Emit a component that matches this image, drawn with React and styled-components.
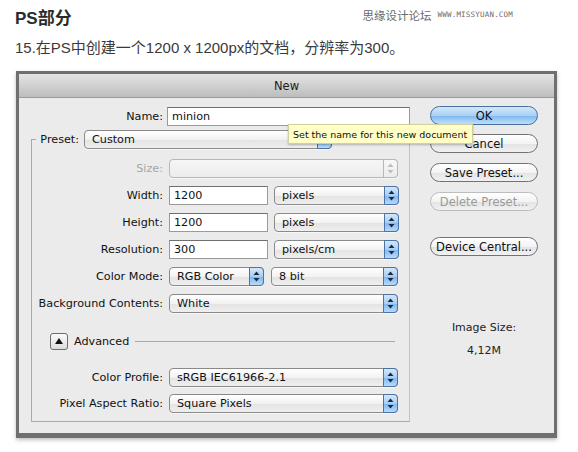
import React from "react";
import styled, { createGlobalStyle } from "styled-components";

const GlobalStyle = createGlobalStyle`
  html, body {
    margin: 0;
    padding: 0;
    background: #ffffff;
  }
  body {
    font-family: "DejaVu Sans", "Noto Sans CJK SC", sans-serif;
  }
`;

const Page = styled.div`
  width: 578px;
  height: 452px;
  position: relative;
  overflow: hidden;
`;

const Header = styled.div`
  padding: 4px 15px 0 15px;
  font-family: "Liberation Sans", "Noto Sans CJK SC", sans-serif;
  color: #333;
`;

const TopLine = styled.div`
  display: flex;
  justify-content: space-between;
  align-items: center;
`;

const Heading = styled.h2`
  margin: 0;
  font-size: 17px;
  font-weight: bold;
  color: #2b2b2b;
`;

const Watermark = styled.div`
  display: flex;
  align-items: center;
  gap: 6px;
  margin-right: 50px;
  margin-bottom: 4px;
  color: #6a6a6a;
  font-size: 11.5px;
  span {
    font-size: 7.5px;
    font-family: "DejaVu Sans Mono", monospace;
    letter-spacing: 0.2px;
  }
`;

const Intro = styled.p`
  margin: 7px 0 0 0;
  font-size: 15px;
  color: #3a3a3a;
`;

const Dialog = styled.div`
  margin: 14px 0 0 16px;
  width: 535px;
  border: 3px solid #6f6f6f;
  border-bottom-width: 5px;
  background: #ebebeb;
  font-size: 11.2px;
  color: #111;
  box-shadow: 0 2px 4px rgba(0, 0, 0, 0.25);
`;

const TitleBar = styled.div`
  height: 23px;
  display: flex;
  align-items: center;
  justify-content: center;
  background: linear-gradient(#e4e4e4, #bdbdbd);
  border-bottom: 1px solid #9a9a9a;
  font-size: 11.5px;
  color: #1c1c1c;
`;

const Body = styled.div`
  display: flex;
  padding: 8px 16px 11px 12px;
  gap: 20px;
  position: relative;
`;

const LeftCol = styled.div`
  width: 379px;
  display: flex;
  flex-direction: column;
`;

const RightCol = styled.div`
  width: 109px;
  display: flex;
  flex-direction: column;
  align-items: stretch;
`;

const Row = styled.div`
  display: flex;
  align-items: center;
  height: 20px;
  margin-top: ${(p) => p.$top || 0}px;
`;

const Label = styled.label`
  width: ${(p) => p.$w || 131}px;
  flex: none;
  text-align: right;
  margin-right: ${(p) => p.$gap || 6}px;
  color: ${(p) => (p.$disabled ? "#a6a6a6" : "#111")};
  white-space: nowrap;
`;

const Input = styled.div`
  width: ${(p) => p.$w}px;
  height: 19px;
  box-sizing: border-box;
  background: #fff;
  border: 1px solid #9a9a9a;
  border-top-color: #6f6f6f;
  padding: 0 4px;
  display: flex;
  align-items: center;
  margin-right: ${(p) => p.$mr || 0}px;
`;

const SelectBox = styled.div`
  position: relative;
  width: ${(p) => p.$w}px;
  height: 19px;
  box-sizing: border-box;
  border: 1px solid ${(p) => (p.$disabled ? "#b8b8b8" : "#8a8a8a")};
  border-radius: 4px;
  background: ${(p) =>
    p.$disabled
      ? "linear-gradient(#f6f6f6, #ececec)"
      : "linear-gradient(#ffffff 0%, #f2f2f2 50%, #e3e3e3 51%, #efefef 100%)"};
  display: flex;
  align-items: center;
  padding-left: 7px;
  margin-right: ${(p) => p.$mr || 0}px;
  box-shadow: 0 1px 0 rgba(255, 255, 255, 0.6);
`;

const Stepper = styled.div`
  position: absolute;
  right: -1px;
  top: -1px;
  bottom: -1px;
  width: 15px;
  border-radius: 0 4px 4px 0;
  border: 1px solid ${(p) => (p.$disabled ? "#b8b8b8" : "#4a73a8")};
  background: ${(p) =>
    p.$disabled
      ? "linear-gradient(#f8f8f8, #ececec)"
      : "linear-gradient(#d4e7fa 0%, #a8cdf3 50%, #7fb5ee 51%, #b6dafc 100%)"};
  display: flex;
  align-items: center;
  justify-content: center;
  box-sizing: border-box;
`;

const Select = ({ w, mr, disabled, children }) => (
  <SelectBox $w={w} $mr={mr} $disabled={disabled}>
    {children}
    <Stepper $disabled={disabled}>
      <svg width="7" height="11" viewBox="0 0 7 11">
        <path d="M3.5 0.5 L6.5 4 L0.5 4 Z" fill={disabled ? "#bdbdbd" : "#1b2a44"} />
        <path d="M3.5 10.5 L6.5 7 L0.5 7 Z" fill={disabled ? "#bdbdbd" : "#1b2a44"} />
      </svg>
    </Stepper>
  </SelectBox>
);

const Group = styled.fieldset`
  margin: 3px 0 0 0;
  padding: 0 0 8px 0;
  border: 1px solid #a9a9a9;
  border-right-color: #c2c2c2;
  min-width: 0;
`;

const Legend = styled.legend`
  display: flex;
  align-items: center;
  height: 20px;
  padding: 0 4px 0 3px;
  margin-left: 4px;
`;

const DisclosureRow = styled.div`
  display: flex;
  align-items: center;
  height: 18px;
  margin: 19px 14px 0 18px;
`;

const Disclosure = styled.div`
  width: 16px;
  height: 15px;
  border: 1px solid #6d6d6d;
  border-radius: 3px;
  background: linear-gradient(#fbfbfb, #dcdcdc);
  display: flex;
  align-items: center;
  justify-content: center;
  margin-right: 6px;
`;

const Rule = styled.div`
  flex: 1;
  height: 1px;
  background: #a8a8a8;
  margin-left: 6px;
`;

const Button = styled.div`
  height: 19px;
  box-sizing: border-box;
  border-radius: 10px;
  border: 1px solid ${(p) => (p.$disabled ? "#bdbdbd" : p.$primary ? "#4a6f9c" : "#727272")};
  background: ${(p) =>
    p.$primary
      ? "linear-gradient(#d3e8fb 0%, #a9d0f5 50%, #7db7ef 51%, #bfe0fc 100%)"
      : "linear-gradient(#ffffff 0%, #f3f3f3 50%, #e3e3e3 51%, #f1f1f1 100%)"};
  color: ${(p) => (p.$disabled ? "#9a9a9a" : "#111")};
  display: flex;
  align-items: center;
  justify-content: center;
  font-size: 11.5px;
  margin-top: ${(p) => p.$top || 0}px;
`;

const Info = styled.div`
  text-align: center;
  margin-top: ${(p) => p.$top || 0}px;
  font-size: 11px;
  color: #222;
`;

const Tooltip = styled.div`
  position: absolute;
  left: 269px;
  top: 26px;
  width: 185px;
  height: 20px;
  box-sizing: border-box;
  background: #ffffc6;
  border: 1px solid #d0d0a0;
  box-shadow: 0 1px 2px rgba(0, 0, 0, 0.25);
  font-size: 9.5px;
  color: #111;
  display: flex;
  align-items: center;
  padding-left: 4px;
  white-space: nowrap;
`;

export default function App() {
  return (
    <Page>
      <GlobalStyle />
      <Header>
        <TopLine>
          <Heading>PS部分</Heading>
          <Watermark>
            思缘设计论坛 <span>WWW.MISSYUAN.COM</span>
          </Watermark>
        </TopLine>
        <Intro>15.在PS中创建一个1200 x 1200px的文档，分辨率为300。</Intro>
      </Header>

      <Dialog>
        <TitleBar>New</TitleBar>
        <Body>
          <LeftCol>
            <Row>
              <Label $w={132} $gap={4}>Name:</Label>
              <Input $w={243}>minion</Input>
            </Row>
            <Group>
              <Legend>
                <Label as="span" $w={40} $gap={5}>Preset:</Label>
                <Select w={248}>Custom</Select>
              </Legend>
              <Row $top={9}>
                <Label $disabled>Size:</Label>
                <Select w={229} disabled></Select>
              </Row>
              <Row $top={7}>
                <Label>Width:</Label>
                <Input $w={99} $mr={6}>1200</Input>
                <Select w={125}>pixels</Select>
              </Row>
              <Row $top={7}>
                <Label>Height:</Label>
                <Input $w={99} $mr={6}>1200</Input>
                <Select w={125}>pixels</Select>
              </Row>
              <Row $top={7}>
                <Label>Resolution:</Label>
                <Input $w={99} $mr={6}>300</Input>
                <Select w={125}>pixels/cm</Select>
              </Row>
              <Row $top={7}>
                <Label>Color Mode:</Label>
                <Select w={95} mr={7}>RGB Color</Select>
                <Select w={127}>8 bit</Select>
              </Row>
              <Row $top={7}>
                <Label>Background Contents:</Label>
                <Select w={229}>White</Select>
              </Row>
              <DisclosureRow>
                <Disclosure>
                  <svg width="8" height="6" viewBox="0 0 8 6">
                    <path d="M4 0 L8 6 L0 6 Z" fill="#111" />
                  </svg>
                </Disclosure>
                Advanced
                <Rule />
              </DisclosureRow>
              <Row $top={17}>
                <Label>Color Profile:</Label>
                <Select w={229}>sRGB IEC61966-2.1</Select>
              </Row>
              <Row $top={6}>
                <Label>Pixel Aspect Ratio:</Label>
                <Select w={229}>Square Pixels</Select>
              </Row>
            </Group>
          </LeftCol>

          <RightCol>
            <Button $primary>OK</Button>
            <Button $top={9}>Cancel</Button>
            <Button $top={10}>Save Preset...</Button>
            <Button $top={10} $disabled>Delete Preset...</Button>
            <Button $top={26}>Device Central...</Button>
            <Info $top={65}>Image Size:</Info>
            <Info $top={10}>4,12M</Info>
          </RightCol>

          <Tooltip>Set the name for this new document</Tooltip>
        </Body>
      </Dialog>
    </Page>
  );
}
